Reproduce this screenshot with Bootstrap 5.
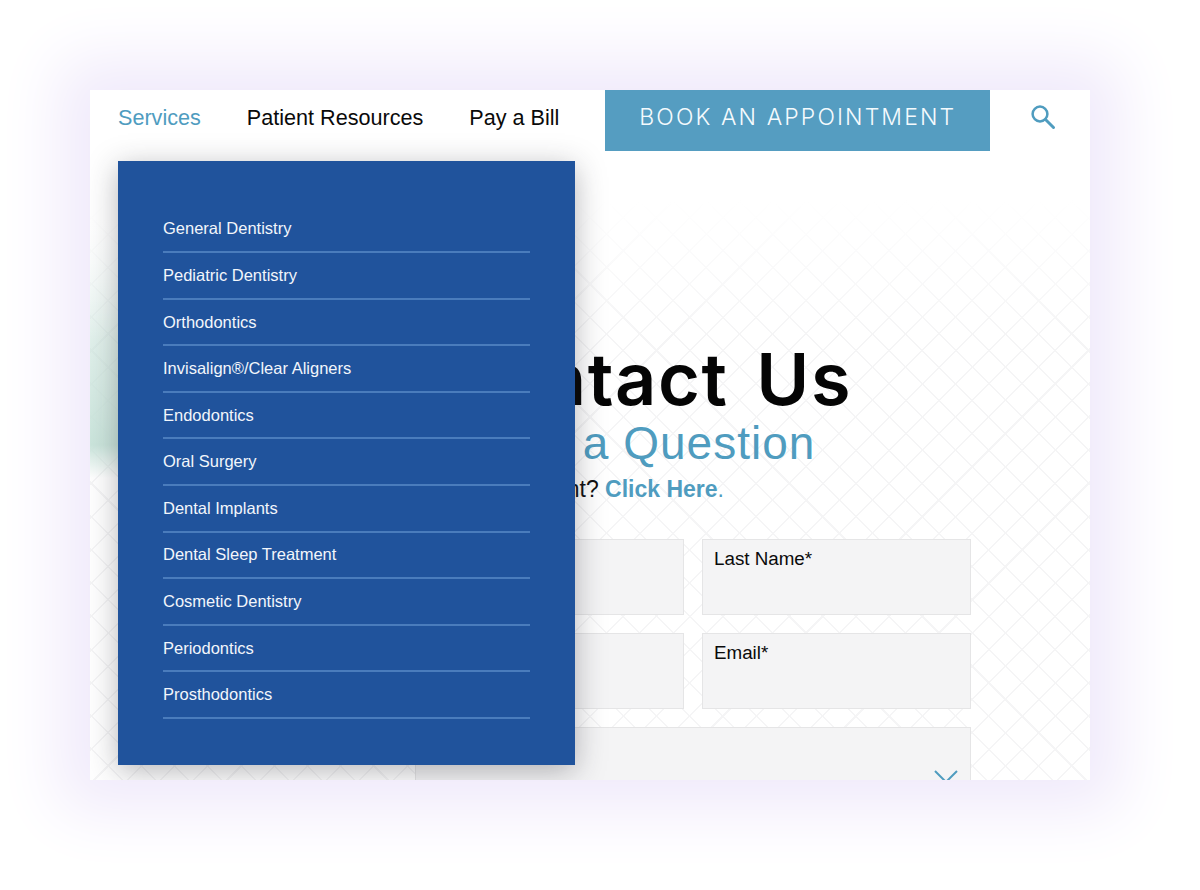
<!DOCTYPE html>
<html lang="en">
<head>
<meta charset="utf-8">
<title>Contact Us</title>
<link href="https://cdn.jsdelivr.net/npm/bootstrap@5.3.0/dist/css/bootstrap.min.css" rel="stylesheet">
<style>
html,body{height:890px;overflow:hidden;background:#fff;}
body{font-family:"Liberation Sans",Arial,sans-serif;padding:90px 110px 110px 90px;}
.site-win{width:1000px;height:690px;position:relative;overflow:hidden;background:#fff;}
.halo-box{width:1000px;height:690px;box-shadow:0 0 60px 30px #f0eafb;}
.site-bg{background-repeat:no-repeat,no-repeat,repeat,repeat;
 background-size:100% 100%,30px 100%,auto,auto;
 background-image:
 linear-gradient(to bottom,#f8fbfa 0,#ffffff 60px,#fff 110px,rgba(255,255,255,0) 250px),
 linear-gradient(to bottom,rgba(198,228,218,0) 130px,rgba(198,228,218,.45) 230px,#cbe5dc 355px,rgba(198,228,218,0) 388px),
 repeating-linear-gradient(45deg,transparent 0 22px,#f5f5f6 22px 23.5px),
 repeating-linear-gradient(-45deg,transparent 0 22px,#f5f5f6 22px 23.5px);}
.top-nav{height:61px;padding-left:28px;gap:46px;white-space:nowrap;background:#fff;}
.top-nav a{font-size:21.6px;color:#0a0a0a;text-decoration:none;line-height:1;margin-top:-5px;flex:none;}
.top-nav a.is-on{color:#4f9cbf;}
.top-nav a.book-btn{margin:0;width:385px;height:61px;padding-bottom:7px;background:#559dc1;color:#f4fafd;font-family:"Inter",sans-serif;font-size:23px;font-weight:300;letter-spacing:2.1px;}
.search-ic{width:26px;height:26px;margin-left:-6px;margin-top:-7px;flex:none;}
.form-wrap{width:555px;margin-left:325px;padding-top:194px;}
.big-title{width:464px;font-family:"Inter",sans-serif;font-weight:600;font-size:72px;line-height:70px;letter-spacing:1.6px;word-spacing:8px;color:#050505;margin:-1px 0 0;text-align:center;white-space:nowrap;}
.sub-title{width:443px;font-size:46px;line-height:1;color:#4f9cbf;text-align:center;margin:6px 0 0;font-weight:400;letter-spacing:1px;white-space:nowrap;}
.intro{width:309px;font-size:23px;line-height:1;color:#111;margin:12px 0 0;white-space:nowrap;}
.intro a{color:#4f9cbf;font-weight:700;text-decoration:none;}
.intro i{color:#4f9cbf;font-style:normal;}
.field-grid{display:grid;grid-template-columns:269px 269px;column-gap:18px;row-gap:18px;margin-top:38px;}
.fake-field{height:76px;background:#f4f4f5;border:1.5px solid #e5e5e6;font-size:18.8px;line-height:1;color:#0a0a0a;padding:10px 11px;}
.wide-field{grid-column:1 / 3;height:120px;position:relative;}
.chev{position:absolute;right:12px;top:42px;width:24px;height:14px;}
.drop-panel{position:absolute;left:28px;top:71px;width:457px;height:604px;background:#20539c;box-shadow:0 6px 28px rgba(40,40,50,.34);padding:45.4px 45px 0 45px;}
.drop-list{list-style:none;margin:0;padding:0;}
.drop-list li{height:46.6px;border-bottom:2px solid #4a7cbc;font-size:16.5px;color:#f2f6fb;display:flex;align-items:center;}
</style>
</head>
<body>
<div class="halo-box">
<div class="site-win site-bg">
  <nav class="top-nav d-flex align-items-center">
    <a class="is-on" href="#">Services</a>
    <a href="#">Patient Resources</a>
    <a href="#">Pay a Bill</a>
    <a class="book-btn d-flex align-items-center justify-content-center" href="#">BOOK AN APPOINTMENT</a>
    <svg class="search-ic" viewBox="0 0 26 26" fill="none" stroke="#4f9cbf" aria-label="Search">
      <circle cx="10" cy="10" r="7.4" stroke-width="2.5"/>
      <path d="M15.5 15.5 23.5 23.5" stroke-width="3" stroke-linecap="round"/>
    </svg>
  </nav>
  <main class="form-wrap">
    <h1 class="big-title">Contact Us</h1>
    <h2 class="sub-title">Have a Question</h2>
    <div class="intro d-flex justify-content-end"><p class="m-0">Want an appointment? <a href="#">Click Here</a><i>.</i></p></div>
    <div class="field-grid">
      <div class="fake-field">First Name*</div>
      <div class="fake-field">Last Name*</div>
      <div class="fake-field">Phone*</div>
      <div class="fake-field">Email*</div>
      <div class="fake-field wide-field">
        <svg class="chev" viewBox="0 0 24 14" fill="none" stroke="#4f9cbf" stroke-width="2"><path d="M1 1 12 12 23 1"/></svg>
      </div>
    </div>
  </main>
  <div class="drop-panel">
    <ul class="drop-list">
      <li>General Dentistry</li>
      <li>Pediatric Dentistry</li>
      <li>Orthodontics</li>
      <li>Invisalign®/Clear Aligners</li>
      <li>Endodontics</li>
      <li>Oral Surgery</li>
      <li>Dental Implants</li>
      <li>Dental Sleep Treatment</li>
      <li>Cosmetic Dentistry</li>
      <li>Periodontics</li>
      <li>Prosthodontics</li>
    </ul>
  </div>
</div>
</div>
<script src="https://cdn.jsdelivr.net/npm/bootstrap@5.3.0/dist/js/bootstrap.bundle.min.js"></script>
</body>
</html>
